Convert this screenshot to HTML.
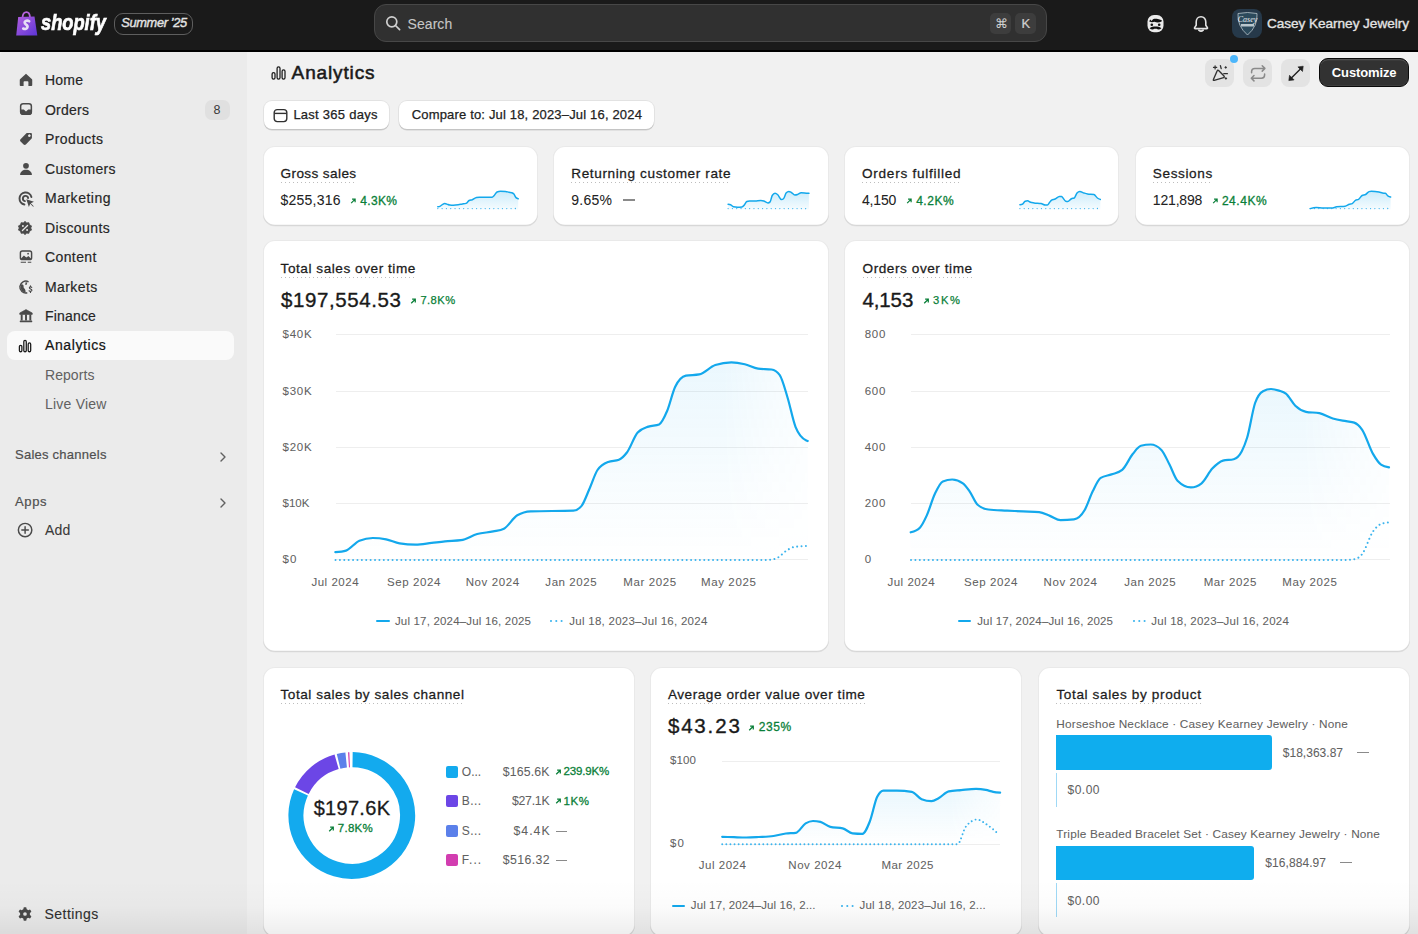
<!DOCTYPE html><html><head><meta charset="utf-8"><style>
*{margin:0;padding:0;box-sizing:border-box}
html,body{width:1418px;height:934px;overflow:hidden;background:#f1f1f1;font-family:"Liberation Sans",sans-serif}
.a{position:absolute}
.t{position:absolute;line-height:1;white-space:nowrap}
.card{position:absolute;background:#fff;border-radius:12px;box-shadow:inset 0 0 0 1px rgba(0,0,0,.085),inset 0 -1.6px 0 0 rgba(0,0,0,.075),0 0.6px 0 0 rgba(0,0,0,.05)}
.ul{position:absolute;height:1.2px;background-image:linear-gradient(90deg,#bdbdbd 0 1.3px,transparent 1.3px 4px);background-size:4px 1.2px}
</style></head><body><div class="a" style="left:0.00px;top:0.00px;width:1418.00px;height:52.00px;background:#1a1a1a"></div>
<div class="a" style="left:0.00px;top:50.40px;width:1418.00px;height:2.00px;background:#000"></div>
<div class="a" style="left:0.00px;top:52.00px;width:247.00px;height:882.00px;background:#ebebeb;border-top-left-radius:4px"></div>
<div class="a" style="left:247.00px;top:52.00px;width:1171.00px;height:882.00px;background:#f1f1f1;border-top-right-radius:4px"></div>
<svg class="a" style="left:14.50px;top:10.50px;" width="23.00" height="26.00" viewBox="0 0 23 26">
<defs><linearGradient id="bagg" x1="0" y1="0" x2="1" y2="1"><stop offset="0" stop-color="#b25ee0"/><stop offset="1" stop-color="#5b35d5"/></linearGradient></defs>
<path d="M7.5 6.5 C7.8 3 9.5 1.2 11.5 1.2 C13.5 1.2 14.8 3 15 6.5" fill="none" stroke="#b863df" stroke-width="1.8"/>
<path d="M3.2 6 L19.5 5.6 L22.3 24.6 L1.2 24.6 Z" fill="url(#bagg)"/>
<path d="M14.2 10.3 C13.2 9.6 11.6 9.5 10.5 10.1 C9.2 10.9 9.4 12.4 10.8 13.3 C12.4 14.3 12.9 15.4 12.3 16.7 C11.6 18.1 9.7 18.3 8.2 17.5" fill="none" stroke="#e6ddf5" stroke-width="2.6" stroke-linecap="round"/>
</svg>
<div class="t" style="left:40.50px;top:12.08px;font-size:22px;color:#ffffff;font-weight:700;font-style:italic;letter-spacing:0.000px;-webkit-text-stroke:0.7px #ffffff;transform:scaleX(0.83);transform-origin:0 0;">shopify</div>
<div class="a" style="left:114.00px;top:13.20px;width:78.80px;height:21.60px;border:1.5px solid #5e5e5e;border-radius:9px"></div>
<div class="t" style="left:121.30px;top:17.36px;font-size:12.8px;color:#e3e3e3;font-weight:400;font-style:italic;letter-spacing:-0.345px;-webkit-text-stroke:0.4px #e3e3e3;">Summer ’25</div>
<div class="a" style="left:373.50px;top:3.70px;width:673.30px;height:38.50px;background:#303030;border:1px solid #474747;border-radius:12px"></div>
<svg class="a" style="left:385.00px;top:15.00px;" width="16.00" height="16.00" viewBox="0 0 16 16"><circle cx="6.8" cy="6.8" r="5" fill="none" stroke="#cfcfcf" stroke-width="1.7"/><path d="M10.5 10.5 L14.6 14.6" stroke="#cfcfcf" stroke-width="1.7" stroke-linecap="round"/></svg>
<div class="t" style="left:407.60px;top:16.55px;font-size:14px;color:#c6c6c6;font-weight:400;font-style:normal;letter-spacing:0.048px;-webkit-text-stroke:0.1px #c6c6c6;">Search</div>
<div class="a" style="left:990.30px;top:13.00px;width:20.30px;height:21.00px;background:#3d3d3d;border-radius:5px"></div>
<div class="a" style="left:1015.40px;top:13.00px;width:20.90px;height:21.00px;background:#3d3d3d;border-radius:5px"></div>
<div class="t" style="left:994.50px;top:17.30px;font-size:13px;color:#d0d0d0;font-weight:400;font-style:normal;letter-spacing:0.000px;">⌘</div>
<div class="t" style="left:1021.50px;top:17.30px;font-size:13px;color:#d0d0d0;font-weight:400;font-style:normal;letter-spacing:0.000px;-webkit-text-stroke:0.2px #d0d0d0;">K</div>
<svg class="a" style="left:1145.50px;top:13.50px;" width="19.00" height="19.00" viewBox="0 0 19 19">
<rect x="1.5" y="1" width="16" height="17.2" rx="6.5" fill="#ebebeb"/>
<path d="M3.2 7.6 L4.2 5.6 L5.6 7 L7 5.2 C9 4.6 12 4.8 13.6 5.6 L15.8 6.2 L15.6 7.6 C13 8.6 10.6 8.8 8.6 7.8 L6 8.2 Z" fill="#111"/>
<circle cx="5.8" cy="10.8" r="1.3" fill="#111"/><circle cx="13.2" cy="10.8" r="1.3" fill="#111"/>
<path d="M3.6 14.2 C5.5 13 7.5 12.6 9.5 12.6 C11.5 12.6 13.5 13 15.4 14.2 C13.8 15.6 12 15.8 10.6 14.8 L8.4 14.8 C7 15.8 5.2 15.6 3.6 14.2 Z" fill="#111"/>
</svg>
<svg class="a" style="left:1192.00px;top:15.00px;" width="18.00" height="18.00" viewBox="0 0 18 18">
<path d="M9 1.8 C6 1.8 4.2 4 4.2 7 L4.2 10.2 L2.6 12.6 C2.3 13.1 2.6 13.6 3.2 13.6 L14.8 13.6 C15.4 13.6 15.7 13.1 15.4 12.6 L13.8 10.2 L13.8 7 C13.8 4 12 1.8 9 1.8 Z" fill="none" stroke="#e3e3e3" stroke-width="1.6" stroke-linejoin="round"/>
<path d="M6.8 15.2 Q9 17.2 11.2 15.2" stroke="#e3e3e3" stroke-width="1.6" fill="none" stroke-linecap="round"/>
</svg>
<div class="a" style="left:1232.30px;top:8.50px;width:29.60px;height:29.20px;background:#26394a;border-radius:8px"></div>
<svg class="a" style="left:1234.50px;top:10.00px;" width="25.00" height="27.00" viewBox="0 0 25 27">
<path d="M3 3.5 Q12.5 1.5 22 3.5 Q23 16 12.5 25 Q2 16 3 3.5 Z" fill="#2c4a5c" stroke="#b9c5cc" stroke-width="0.8"/>
<text x="12.5" y="11.5" font-family="Liberation Serif" font-style="italic" font-size="8" fill="#e8eef2" text-anchor="middle">Casey</text>
<rect x="6" y="14" width="13" height="2.5" fill="#dfe6ea" opacity=".8"/>
</svg>
<div class="t" style="left:1267.00px;top:16.69px;font-size:13.6px;color:#e3e3e3;font-weight:400;font-style:normal;letter-spacing:-0.043px;-webkit-text-stroke:0.35px #e3e3e3;">Casey Kearney Jewelry</div>
<div class="a" style="left:6.60px;top:330.80px;width:227.20px;height:29.00px;background:#fafafa;border-radius:8px"></div>
<div class="t" style="left:45.00px;top:73.15px;font-size:14px;color:#262626;font-weight:400;font-style:normal;letter-spacing:0.218px;-webkit-text-stroke:0.18px #262626;">Home</div>
<div class="t" style="left:45.00px;top:102.65px;font-size:14px;color:#262626;font-weight:400;font-style:normal;letter-spacing:0.223px;-webkit-text-stroke:0.18px #262626;">Orders</div>
<div class="t" style="left:45.00px;top:132.15px;font-size:14px;color:#262626;font-weight:400;font-style:normal;letter-spacing:0.393px;-webkit-text-stroke:0.18px #262626;">Products</div>
<div class="t" style="left:45.00px;top:161.65px;font-size:14px;color:#262626;font-weight:400;font-style:normal;letter-spacing:0.364px;-webkit-text-stroke:0.18px #262626;">Customers</div>
<div class="t" style="left:45.00px;top:191.15px;font-size:14px;color:#262626;font-weight:400;font-style:normal;letter-spacing:0.504px;-webkit-text-stroke:0.18px #262626;">Marketing</div>
<div class="t" style="left:45.00px;top:220.65px;font-size:14px;color:#262626;font-weight:400;font-style:normal;letter-spacing:0.404px;-webkit-text-stroke:0.18px #262626;">Discounts</div>
<div class="t" style="left:45.00px;top:250.15px;font-size:14px;color:#262626;font-weight:400;font-style:normal;letter-spacing:0.394px;-webkit-text-stroke:0.18px #262626;">Content</div>
<div class="t" style="left:45.00px;top:279.65px;font-size:14px;color:#262626;font-weight:400;font-style:normal;letter-spacing:0.402px;-webkit-text-stroke:0.18px #262626;">Markets</div>
<div class="t" style="left:45.00px;top:308.95px;font-size:14px;color:#262626;font-weight:400;font-style:normal;letter-spacing:0.182px;-webkit-text-stroke:0.18px #262626;">Finance</div>
<div class="t" style="left:45.00px;top:338.45px;font-size:14px;color:#141414;font-weight:400;font-style:normal;letter-spacing:0.597px;-webkit-text-stroke:0.22px #141414;">Analytics</div>
<div class="t" style="left:45.00px;top:367.95px;font-size:14px;color:#616161;font-weight:400;font-style:normal;letter-spacing:0.063px;">Reports</div>
<div class="t" style="left:45.00px;top:397.45px;font-size:14px;color:#616161;font-weight:400;font-style:normal;letter-spacing:0.217px;">Live View</div>
<div class="t" style="left:15.00px;top:448.40px;font-size:13px;color:#4f4f4f;font-weight:400;font-style:normal;letter-spacing:0.248px;-webkit-text-stroke:0.2px #4f4f4f;">Sales channels</div>
<div class="t" style="left:15.00px;top:494.60px;font-size:13px;color:#4f4f4f;font-weight:400;font-style:normal;letter-spacing:0.623px;-webkit-text-stroke:0.2px #4f4f4f;">Apps</div>
<div class="t" style="left:45.00px;top:523.45px;font-size:14px;color:#3a3a3a;font-weight:400;font-style:normal;letter-spacing:0.244px;-webkit-text-stroke:0.08px #3a3a3a;">Add</div>
<div class="t" style="left:44.60px;top:906.85px;font-size:14px;color:#303030;font-weight:400;font-style:normal;letter-spacing:0.430px;-webkit-text-stroke:0.12px #303030;">Settings</div>
<div class="a" style="left:204.80px;top:99.50px;width:24.90px;height:20.60px;background:#e0e0e0;border-radius:7px"></div>
<div class="t" style="left:213.60px;top:104.02px;font-size:12.5px;color:#3a3a3a;font-weight:400;font-style:normal;letter-spacing:0.000px;">8</div>
<svg class="a" style="left:217.00px;top:450.90px;" width="12.00" height="12.00" viewBox="0 0 12 12"><path d="M4 2 L8 6 L4 10" fill="none" stroke="#616161" stroke-width="1.4" stroke-linecap="round" stroke-linejoin="round"/></svg>
<svg class="a" style="left:217.00px;top:497.30px;" width="12.00" height="12.00" viewBox="0 0 12 12"><path d="M4 2 L8 6 L4 10" fill="none" stroke="#616161" stroke-width="1.4" stroke-linecap="round" stroke-linejoin="round"/></svg>
<svg class="a" style="left:17.50px;top:71.50px;" width="16.00" height="16.00" viewBox="0 0 20 20"><path d="M10 2.2 L17.2 8.6 C17.6 9 17.8 9.5 17.8 10 L17.8 16.2 C17.8 17 17.2 17.6 16.4 17.6 L13 17.6 L13 12.6 C13 12 12.6 11.6 12 11.6 L8 11.6 C7.4 11.6 7 12 7 12.6 L7 17.6 L3.6 17.6 C2.8 17.6 2.2 17 2.2 16.2 L2.2 10 C2.2 9.5 2.4 9 2.8 8.6 Z" fill="#4a4a4a"/></svg>
<svg class="a" style="left:17.50px;top:101.00px;" width="16.00" height="16.00" viewBox="0 0 20 20"><rect x="3.3" y="3.3" width="13.4" height="13.4" rx="3" fill="none" stroke="#4a4a4a" stroke-width="1.9"/><path d="M2.8 10.6 L7.2 10.6 L10 13.2 L12.8 10.6 L17.2 10.6 L17.2 14.2 Q17.2 17.2 14.2 17.2 L5.8 17.2 Q2.8 17.2 2.8 14.2 Z" fill="#4a4a4a"/></svg>
<svg class="a" style="left:17.50px;top:131.00px;" width="16.00" height="16.00" viewBox="0 0 20 20"><path d="M11.6 2.6 L16.2 2.6 C16.9 2.6 17.4 3.1 17.4 3.8 L17.4 8.4 C17.4 8.9 17.2 9.4 16.8 9.8 L9.8 16.8 C9 17.6 7.8 17.6 7 16.8 L3.2 13 C2.4 12.2 2.4 11 3.2 10.2 L10.2 3.2 C10.6 2.8 11.1 2.6 11.6 2.6 Z M14.2 4.4 A1.4 1.4 0 1 0 14.21 4.4 Z" fill="#4a4a4a" fill-rule="evenodd"/><circle cx="14.2" cy="5.8" r="1.3" fill="#ebebeb"/></svg>
<svg class="a" style="left:17.50px;top:160.50px;" width="16.00" height="16.00" viewBox="0 0 20 20"><circle cx="10" cy="6" r="3.6" fill="#4a4a4a"/><path d="M2.6 17.4 C2.6 13.2 6 10.8 10 10.8 C14 10.8 17.4 13.2 17.4 17.4 Z" fill="#4a4a4a"/></svg>
<svg class="a" style="left:15.60px;top:188.60px;" width="19.50" height="19.50" viewBox="0 0 20 20"><path d="M15.8 8.2 A6.2 6.2 0 1 0 8.6 15.9" fill="none" stroke="#4a4a4a" stroke-width="2" stroke-linecap="round"/><path d="M12.4 9.2 A2.7 2.7 0 1 0 9.2 12.4" fill="none" stroke="#4a4a4a" stroke-width="2" stroke-linecap="round"/><path d="M10.6 10.6 L18.4 13.2 L15.2 14.6 L18.2 17.6 L17.6 18.2 L14.6 15.2 L13.2 18.4 Z" fill="#4a4a4a"/></svg>
<svg class="a" style="left:17.00px;top:219.50px;" width="16.00" height="16.00" viewBox="0 0 20 20"><path d="M10 1.6 L12 3.6 L14.8 3.3 L15.6 6 L18.2 7.4 L17.2 10 L18.2 12.6 L15.6 14 L14.8 16.7 L12 16.4 L10 18.4 L8 16.4 L5.2 16.7 L4.4 14 L1.8 12.6 L2.8 10 L1.8 7.4 L4.4 6 L5.2 3.3 L8 3.6 Z" fill="#4a4a4a" stroke="#4a4a4a" stroke-width="1" stroke-linejoin="round"/><path d="M6.8 13.2 L13.2 6.8" stroke="#ebebeb" stroke-width="1.6" stroke-linecap="round"/><circle cx="7.4" cy="7.4" r="1.2" fill="#ebebeb"/><circle cx="12.6" cy="12.6" r="1.2" fill="#ebebeb"/></svg>
<svg class="a" style="left:17.50px;top:248.50px;" width="16.00" height="16.00" viewBox="0 0 20 20"><rect x="3" y="2.6" width="14" height="10.6" rx="2.4" fill="none" stroke="#4a4a4a" stroke-width="1.8"/><path d="M3.8 11.8 L7.4 8 L10.4 10.6 L13 8.8 L16.2 11.8 L16.2 12.4 L3.8 12.4 Z" fill="#4a4a4a"/><circle cx="12.6" cy="5.8" r="1.1" fill="#4a4a4a"/><path d="M3.4 16.6 L10 16.6 M12.2 16.6 L16.6 16.6" stroke="#4a4a4a" stroke-width="1.3"/></svg>
<svg class="a" style="left:17.50px;top:278.50px;" width="16.00" height="16.00" viewBox="0 0 20 20"><path d="M13.2 3.5 A7.4 7.4 0 1 0 11.6 17.2" fill="none" stroke="#4a4a4a" stroke-width="1.8"/><path d="M4 6.6 C6 6.2 7.4 7.6 7 9.6 C6.6 11.2 8.6 12 9.2 13.6 L9.6 16.8 C6 16.6 3.4 14 3.2 10.2 Z" fill="#4a4a4a"/><path d="M9.6 3.6 L11.6 4.6 L10.6 7.6 L9 7.2 Z" fill="#4a4a4a"/><path d="M17.2 10.4 C16.4 9.6 14.2 9.6 14.2 11 C14.2 12.6 17.4 12.2 17.4 14 C17.4 15.6 15 15.6 13.8 14.8 M15.6 8.6 L15.6 9.8 M15.6 15.4 L15.6 16.8" fill="none" stroke="#4a4a4a" stroke-width="1.4" stroke-linecap="round"/></svg>
<svg class="a" style="left:17.50px;top:307.50px;" width="16.00" height="16.00" viewBox="0 0 20 20"><path d="M10 2 L17.8 6.2 L17.8 8 L2.2 8 L2.2 6.2 Z" fill="#4a4a4a" stroke="#4a4a4a" stroke-width="0.8" stroke-linejoin="round"/><rect x="2.2" y="15.6" width="15.6" height="2.2" rx="0.6" fill="#4a4a4a"/><rect x="3.4" y="8" width="2.4" height="7.6" fill="#4a4a4a"/><rect x="8.8" y="8" width="2.4" height="7.6" fill="#4a4a4a"/><rect x="14.2" y="8" width="2.4" height="7.6" fill="#4a4a4a"/></svg>
<svg class="a" style="left:17.20px;top:337.50px;" width="16.00" height="16.00" viewBox="0 0 20 20"><rect x="3" y="9.2" width="3.1" height="8" rx="1.55" fill="none" stroke="#1a1a1a" stroke-width="1.6"/><rect x="8.5" y="3" width="3.1" height="14.2" rx="1.55" fill="none" stroke="#1a1a1a" stroke-width="1.6"/><rect x="14" y="6.2" width="3.1" height="11" rx="1.55" fill="none" stroke="#1a1a1a" stroke-width="1.6"/></svg>
<svg class="a" style="left:16.20px;top:521.30px;" width="18.20" height="18.20" viewBox="0 0 20 20"><circle cx="10" cy="10" r="7.4" fill="none" stroke="#4a4a4a" stroke-width="1.6"/><path d="M10 6.4 L10 13.6 M6.4 10 L13.6 10" stroke="#4a4a4a" stroke-width="1.6" stroke-linecap="round"/></svg>
<svg class="a" style="left:17.20px;top:905.80px;" width="16.00" height="16.00" viewBox="0 0 20 20"><circle cx="10" cy="10" r="6.2" fill="#4a4a4a"/><rect x="8.1" y="1.6" width="3.8" height="4" rx="1" fill="#4a4a4a" transform="rotate(0 10 10)"/><rect x="8.1" y="1.6" width="3.8" height="4" rx="1" fill="#4a4a4a" transform="rotate(60 10 10)"/><rect x="8.1" y="1.6" width="3.8" height="4" rx="1" fill="#4a4a4a" transform="rotate(120 10 10)"/><rect x="8.1" y="1.6" width="3.8" height="4" rx="1" fill="#4a4a4a" transform="rotate(180 10 10)"/><rect x="8.1" y="1.6" width="3.8" height="4" rx="1" fill="#4a4a4a" transform="rotate(240 10 10)"/><rect x="8.1" y="1.6" width="3.8" height="4" rx="1" fill="#4a4a4a" transform="rotate(300 10 10)"/><circle cx="10" cy="10" r="2.3" fill="#e9e9e9"/></svg>
<svg class="a" style="left:270.50px;top:65.50px;" width="15.00" height="14.00" viewBox="0 0 15 14"><rect x="1.1" y="6.6" width="2.9" height="6.6" rx="1.45" fill="none" stroke="#1a1a1a" stroke-width="1.25"/><rect x="6.1" y="0.8" width="2.9" height="12.4" rx="1.45" fill="none" stroke="#1a1a1a" stroke-width="1.25"/><rect x="11.1" y="3.8" width="2.9" height="9.4" rx="1.45" fill="none" stroke="#1a1a1a" stroke-width="1.25"/></svg>
<div class="t" style="left:291.60px;top:63.12px;font-size:19px;color:#1a1a1a;font-weight:400;font-style:normal;letter-spacing:0.859px;-webkit-text-stroke:0.55px #1a1a1a;">Analytics</div>
<div class="a" style="left:1205.20px;top:58.60px;width:29.10px;height:28.40px;background:#e3e3e3;border-radius:8px"></div>
<div class="a" style="left:1243.40px;top:58.60px;width:29.00px;height:28.40px;background:#e3e3e3;border-radius:8px"></div>
<div class="a" style="left:1281.20px;top:58.60px;width:29.10px;height:28.40px;background:#e3e3e3;border-radius:8px"></div>
<svg class="a" style="left:1205.00px;top:58.60px;" width="30.00" height="29.00" viewBox="1205 58.6 30 29">
<path d="M1213.4 79.2 C1213 79.6 1213.6 80.2 1214.2 79.9 L1223.6 77.2 C1224.3 77 1224.5 76.2 1224 75.7 L1218.6 70.1 C1218.1 69.6 1217.3 69.8 1217.1 70.5 Z" fill="none" stroke="#303030" stroke-width="1.35" stroke-linejoin="round"/>
<path d="M1215.1 65.4 L1215.1 68.6 M1213.5 67 L1216.7 67" stroke="#303030" stroke-width="1.2" stroke-linecap="round"/>
<path d="M1220.4 65.2 L1221.2 68.2" stroke="#303030" stroke-width="1.3" stroke-linecap="round"/>
<path d="M1225.7 65.6 L1227.1 67 L1225.7 68.4 L1224.3 67 Z" fill="#303030"/>
<path d="M1223.8 73.3 L1227.4 73.3" stroke="#303030" stroke-width="1.3" stroke-linecap="round"/>
<path d="M1225.9 76.6 L1227.3 78 L1225.9 79.4 L1224.5 78 Z" fill="#303030"/>
</svg>
<div class="a" style="left:1229.80px;top:55.10px;width:8.00px;height:8.00px;background:#4cb6fb;border-radius:50%"></div>
<svg class="a" style="left:1243.00px;top:58.60px;" width="30.00" height="29.00" viewBox="1243 58.6 30 29">
<path d="M1251.6 72.3 L1251.6 71.2 C1251.6 69.4 1253 68 1254.8 68 L1264.6 68 M1262.2 65.3 L1264.9 68 L1262.2 70.7" fill="none" stroke="#8a8a8a" stroke-width="1.5" stroke-linecap="round" stroke-linejoin="round"/>
<path d="M1264.6 73.6 L1264.6 74.6 C1264.6 76.4 1263.2 77.8 1261.4 77.8 L1251.6 77.8 M1254 75.1 L1251.3 77.8 L1254 80.5" fill="none" stroke="#8a8a8a" stroke-width="1.5" stroke-linecap="round" stroke-linejoin="round"/>
</svg>
<svg class="a" style="left:1281.00px;top:58.60px;" width="30.00" height="29.00" viewBox="1281 58.6 30 29">
<path d="M1290.6 78.4 L1301.4 67.6" stroke="#1f1f1f" stroke-width="1.35" stroke-linecap="round"/>
<path d="M1303.2 65.8 L1297.9 66.5 L1302.5 71.1 Z" fill="#1f1f1f" stroke="#1f1f1f" stroke-width="0.6" stroke-linejoin="round"/>
<path d="M1288.8 80.2 L1289.5 74.9 L1294.1 79.5 Z" fill="#1f1f1f" stroke="#1f1f1f" stroke-width="0.6" stroke-linejoin="round"/>
</svg>
<div class="a" style="left:1319.20px;top:58.20px;width:90.00px;height:29.00px;background:#323232;border:1px solid #0a0a0a;border-radius:9px;box-shadow:inset 0 1.2px 0 rgba(255,255,255,.16),inset 0 -1px 0 rgba(255,255,255,.06)"></div>
<div class="t" style="left:1331.80px;top:65.80px;font-size:13px;color:#ffffff;font-weight:700;font-style:normal;letter-spacing:-0.116px;">Customize</div>
<div class="a" style="left:263.70px;top:101.00px;width:125.80px;height:28.00px;background:#fff;border-radius:8px;box-shadow:0 0 0 1px rgba(0,0,0,.06),0 1.5px 0 rgba(0,0,0,.13)"></div>
<div class="a" style="left:399.00px;top:101.00px;width:255.00px;height:28.00px;background:#fff;border-radius:8px;box-shadow:0 0 0 1px rgba(0,0,0,.06),0 1.5px 0 rgba(0,0,0,.13)"></div>
<svg class="a" style="left:272.50px;top:107.50px;" width="15.00" height="15.00" viewBox="0 0 15 15"><rect x="1.2" y="1.6" width="12.6" height="12" rx="3" fill="none" stroke="#303030" stroke-width="1.4"/><path d="M1.5 5.4 L13.5 5.4" stroke="#303030" stroke-width="1.4"/></svg>
<div class="t" style="left:293.40px;top:108.30px;font-size:13px;color:#222222;font-weight:400;font-style:normal;letter-spacing:0.254px;-webkit-text-stroke:0.25px #222222;">Last 365 days</div>
<div class="t" style="left:411.70px;top:108.30px;font-size:13px;color:#222222;font-weight:400;font-style:normal;letter-spacing:0.171px;-webkit-text-stroke:0.25px #222222;">Compare to: Jul 18, 2023–Jul 16, 2024</div>
<div class="card" style="left:262.50px;top:145.50px;width:275.25px;height:80.50px;"></div>
<div class="card" style="left:553.25px;top:145.50px;width:275.25px;height:80.50px;"></div>
<div class="card" style="left:844.00px;top:145.50px;width:275.25px;height:80.50px;"></div>
<div class="card" style="left:1134.75px;top:145.50px;width:275.25px;height:80.50px;"></div>
<div class="t" style="left:280.50px;top:166.79px;font-size:13.6px;color:#1c1c1c;font-weight:400;font-style:normal;letter-spacing:0.390px;-webkit-text-stroke:0.26px #1c1c1c;">Gross sales</div>
<div class="ul" style="left:280.50px;top:182.00px;width:75.70px"></div>
<div class="t" style="left:280.50px;top:193.15px;font-size:14px;color:#222222;font-weight:400;font-style:normal;letter-spacing:0.244px;-webkit-text-stroke:0.05px #222222;">$255,316</div>
<svg class="a" style="left:350.10px;top:198.00px;" width="6.30" height="6.30" viewBox="0 0 8 8"><path d="M1.5 6.5 L6.2 1.8 M2.6 1.5 L6.5 1.5 L6.5 5.4" fill="none" stroke="#0a7f39" stroke-width="1.55" stroke-linecap="butt" stroke-linejoin="miter"/></svg>
<div class="t" style="left:360.30px;top:194.84px;font-size:12px;color:#0a7f39;font-weight:400;font-style:normal;letter-spacing:0.336px;-webkit-text-stroke:0.3px #0a7f39;">4.3K%</div>
<div class="t" style="left:571.25px;top:166.79px;font-size:13.6px;color:#1c1c1c;font-weight:400;font-style:normal;letter-spacing:0.612px;-webkit-text-stroke:0.26px #1c1c1c;">Returning customer rate</div>
<div class="ul" style="left:571.25px;top:182.00px;width:159.35px"></div>
<div class="t" style="left:571.25px;top:193.15px;font-size:14px;color:#222222;font-weight:400;font-style:normal;letter-spacing:0.263px;-webkit-text-stroke:0.05px #222222;">9.65%</div>
<div class="a" style="left:623.00px;top:199.30px;width:12.30px;height:1.40px;background:#8a8a8a"></div>
<div class="t" style="left:862.00px;top:166.79px;font-size:13.6px;color:#1c1c1c;font-weight:400;font-style:normal;letter-spacing:0.728px;-webkit-text-stroke:0.26px #1c1c1c;">Orders fulfilled</div>
<div class="ul" style="left:862.00px;top:182.00px;width:98.60px"></div>
<div class="t" style="left:862.00px;top:193.15px;font-size:14px;color:#222222;font-weight:400;font-style:normal;letter-spacing:-0.184px;-webkit-text-stroke:0.05px #222222;">4,150</div>
<svg class="a" style="left:906.20px;top:198.00px;" width="6.30" height="6.30" viewBox="0 0 8 8"><path d="M1.5 6.5 L6.2 1.8 M2.6 1.5 L6.5 1.5 L6.5 5.4" fill="none" stroke="#0a7f39" stroke-width="1.55" stroke-linecap="butt" stroke-linejoin="miter"/></svg>
<div class="t" style="left:916.20px;top:194.84px;font-size:12px;color:#0a7f39;font-weight:400;font-style:normal;letter-spacing:0.511px;-webkit-text-stroke:0.3px #0a7f39;">4.2K%</div>
<div class="t" style="left:1152.75px;top:166.79px;font-size:13.6px;color:#1c1c1c;font-weight:400;font-style:normal;letter-spacing:0.624px;-webkit-text-stroke:0.26px #1c1c1c;">Sessions</div>
<div class="ul" style="left:1152.75px;top:182.00px;width:59.55px"></div>
<div class="t" style="left:1152.75px;top:193.15px;font-size:14px;color:#222222;font-weight:400;font-style:normal;letter-spacing:-0.160px;-webkit-text-stroke:0.05px #222222;">121,898</div>
<svg class="a" style="left:1212.30px;top:198.00px;" width="6.30" height="6.30" viewBox="0 0 8 8"><path d="M1.5 6.5 L6.2 1.8 M2.6 1.5 L6.5 1.5 L6.5 5.4" fill="none" stroke="#0a7f39" stroke-width="1.55" stroke-linecap="butt" stroke-linejoin="miter"/></svg>
<div class="t" style="left:1221.90px;top:194.84px;font-size:12px;color:#0a7f39;font-weight:400;font-style:normal;letter-spacing:0.534px;-webkit-text-stroke:0.3px #0a7f39;">24.4K%</div>
<svg class="a" style="left:0;top:0" width="1418" height="934" viewBox="0 0 1418 934"><defs><linearGradient id="g1" x1="0" y1="191.3" x2="0" y2="209.5" gradientUnits="userSpaceOnUse"><stop offset="0" stop-color="#13a8ec" stop-opacity="0.22"/><stop offset="1" stop-color="#13a8ec" stop-opacity="0.04"/></linearGradient></defs><path d="M437.80,206.80 C438.50,206.73 439.20,206.67 439.90,206.40 C440.83,206.04 441.77,204.78 442.70,204.30 C443.40,203.94 444.10,203.60 444.80,203.60 C445.50,203.60 446.20,203.91 446.90,204.10 C447.83,204.36 448.77,204.90 449.70,205.00 C450.90,205.13 452.10,205.20 453.30,205.20 C454.93,205.20 456.57,205.03 458.20,204.80 C459.60,204.60 461.00,204.25 462.40,204.00 C463.60,203.79 464.80,203.80 466.00,203.40 C467.03,203.06 468.07,201.02 469.10,200.50 C470.17,199.97 471.23,200.09 472.30,199.70 C473.70,199.18 475.10,197.79 476.50,197.50 C477.47,197.30 478.43,197.20 479.40,197.20 C483.63,197.20 487.87,197.20 492.10,197.20 C492.80,197.20 493.50,196.20 494.20,195.50 C495.13,194.57 496.07,192.37 497.00,192.00 C498.17,191.53 499.33,191.30 500.50,191.30 C502.17,191.30 503.83,191.33 505.50,191.40 C506.67,191.45 507.83,192.07 509.00,192.30 C509.93,192.48 510.87,192.43 511.80,192.70 C512.50,192.90 513.20,193.28 513.90,194.10 C514.60,194.92 515.30,196.90 516.00,197.60 C516.73,198.33 517.47,198.52 518.20,198.70 L518.20,209.50 L437.80,209.50 Z" fill="url(#g1)"/><path d="M437.80,208.60 C463.27,208.60 488.73,208.60 514.20,208.60 C515.53,208.60 516.87,208.10 518.20,207.60" fill="none" stroke="#3bb4ee" stroke-width="1.3" stroke-linecap="round" stroke-dasharray="0.01 4.3"/><path d="M437.80,206.80 C438.50,206.73 439.20,206.67 439.90,206.40 C440.83,206.04 441.77,204.78 442.70,204.30 C443.40,203.94 444.10,203.60 444.80,203.60 C445.50,203.60 446.20,203.91 446.90,204.10 C447.83,204.36 448.77,204.90 449.70,205.00 C450.90,205.13 452.10,205.20 453.30,205.20 C454.93,205.20 456.57,205.03 458.20,204.80 C459.60,204.60 461.00,204.25 462.40,204.00 C463.60,203.79 464.80,203.80 466.00,203.40 C467.03,203.06 468.07,201.02 469.10,200.50 C470.17,199.97 471.23,200.09 472.30,199.70 C473.70,199.18 475.10,197.79 476.50,197.50 C477.47,197.30 478.43,197.20 479.40,197.20 C483.63,197.20 487.87,197.20 492.10,197.20 C492.80,197.20 493.50,196.20 494.20,195.50 C495.13,194.57 496.07,192.37 497.00,192.00 C498.17,191.53 499.33,191.30 500.50,191.30 C502.17,191.30 503.83,191.33 505.50,191.40 C506.67,191.45 507.83,192.07 509.00,192.30 C509.93,192.48 510.87,192.43 511.80,192.70 C512.50,192.90 513.20,193.28 513.90,194.10 C514.60,194.92 515.30,196.90 516.00,197.60 C516.73,198.33 517.47,198.52 518.20,198.70" fill="none" stroke="#13a8ec" stroke-width="1.5" stroke-linecap="round" stroke-linejoin="round"/></svg>
<svg class="a" style="left:0;top:0" width="1418" height="934" viewBox="0 0 1418 934"><defs><linearGradient id="g2" x1="0" y1="191.4" x2="0" y2="209.5" gradientUnits="userSpaceOnUse"><stop offset="0" stop-color="#13a8ec" stop-opacity="0.22"/><stop offset="1" stop-color="#13a8ec" stop-opacity="0.04"/></linearGradient></defs><path d="M728.10,204.30 C728.93,204.38 729.77,204.47 730.60,204.80 C731.53,205.17 732.47,206.62 733.40,206.80 C734.80,207.07 736.20,207.20 737.60,207.20 C739.03,207.20 740.47,207.10 741.90,206.90 C742.60,206.80 743.30,206.10 744.00,205.40 C744.93,204.46 745.87,201.83 746.80,201.50 C747.73,201.17 748.67,201.03 749.60,201.00 C751.50,200.93 753.40,200.97 755.30,200.90 C757.17,200.83 759.03,200.50 760.90,200.50 C761.83,200.50 762.77,200.74 763.70,201.00 C765.13,201.40 766.57,202.90 768.00,202.90 C768.70,202.90 769.40,202.57 770.10,201.90 C770.80,201.23 771.50,196.60 772.20,195.50 C773.13,194.03 774.07,193.30 775.00,193.30 C775.93,193.30 776.87,193.97 777.80,194.80 C779.00,195.86 780.20,199.60 781.40,199.60 C782.10,199.60 782.80,199.30 783.50,198.70 C784.43,197.90 785.37,193.67 786.30,192.70 C787.13,191.83 787.97,191.40 788.80,191.40 C789.60,191.40 790.40,191.88 791.20,192.30 C792.40,192.93 793.60,195.00 794.80,195.00 C795.73,195.00 796.67,194.79 797.60,194.50 C798.77,194.13 799.93,192.80 801.10,192.80 C802.27,192.80 803.43,192.83 804.60,192.90 C806.03,192.98 807.47,193.14 808.90,193.30 L808.90,209.50 L728.10,209.50 Z" fill="url(#g2)"/><path d="M728.10,208.60 C753.70,208.60 779.30,208.60 804.90,208.60 C806.23,208.60 807.57,208.10 808.90,207.60" fill="none" stroke="#3bb4ee" stroke-width="1.3" stroke-linecap="round" stroke-dasharray="0.01 4.3"/><path d="M728.10,204.30 C728.93,204.38 729.77,204.47 730.60,204.80 C731.53,205.17 732.47,206.62 733.40,206.80 C734.80,207.07 736.20,207.20 737.60,207.20 C739.03,207.20 740.47,207.10 741.90,206.90 C742.60,206.80 743.30,206.10 744.00,205.40 C744.93,204.46 745.87,201.83 746.80,201.50 C747.73,201.17 748.67,201.03 749.60,201.00 C751.50,200.93 753.40,200.97 755.30,200.90 C757.17,200.83 759.03,200.50 760.90,200.50 C761.83,200.50 762.77,200.74 763.70,201.00 C765.13,201.40 766.57,202.90 768.00,202.90 C768.70,202.90 769.40,202.57 770.10,201.90 C770.80,201.23 771.50,196.60 772.20,195.50 C773.13,194.03 774.07,193.30 775.00,193.30 C775.93,193.30 776.87,193.97 777.80,194.80 C779.00,195.86 780.20,199.60 781.40,199.60 C782.10,199.60 782.80,199.30 783.50,198.70 C784.43,197.90 785.37,193.67 786.30,192.70 C787.13,191.83 787.97,191.40 788.80,191.40 C789.60,191.40 790.40,191.88 791.20,192.30 C792.40,192.93 793.60,195.00 794.80,195.00 C795.73,195.00 796.67,194.79 797.60,194.50 C798.77,194.13 799.93,192.80 801.10,192.80 C802.27,192.80 803.43,192.83 804.60,192.90 C806.03,192.98 807.47,193.14 808.90,193.30" fill="none" stroke="#13a8ec" stroke-width="1.5" stroke-linecap="round" stroke-linejoin="round"/></svg>
<svg class="a" style="left:0;top:0" width="1418" height="934" viewBox="0 0 1418 934"><defs><linearGradient id="g3" x1="0" y1="191.4" x2="0" y2="209.5" gradientUnits="userSpaceOnUse"><stop offset="0" stop-color="#13a8ec" stop-opacity="0.22"/><stop offset="1" stop-color="#13a8ec" stop-opacity="0.04"/></linearGradient></defs><path d="M1019.90,204.70 C1020.70,204.63 1021.50,204.57 1022.30,204.30 C1023.27,203.98 1024.23,201.52 1025.20,201.20 C1026.00,200.93 1026.80,200.80 1027.60,200.80 C1028.57,200.80 1029.53,201.86 1030.50,202.20 C1031.67,202.61 1032.83,202.71 1034.00,202.90 C1036.33,203.28 1038.67,203.10 1041.00,203.50 C1042.43,203.75 1043.87,205.00 1045.30,205.00 C1046.00,205.00 1046.70,205.00 1047.40,205.00 C1048.10,205.00 1048.80,203.42 1049.50,202.60 C1050.20,201.78 1050.90,200.54 1051.60,200.10 C1052.77,199.37 1053.93,199.52 1055.10,199.00 C1056.53,198.36 1057.97,196.40 1059.40,196.40 C1060.10,196.40 1060.80,196.47 1061.50,196.60 C1062.90,196.87 1064.30,200.80 1065.70,201.20 C1066.40,201.40 1067.10,201.50 1067.80,201.50 C1069.00,201.50 1070.20,199.28 1071.40,198.70 C1072.33,198.25 1073.27,198.47 1074.20,198.00 C1075.13,197.53 1076.07,194.07 1077.00,193.00 C1077.93,191.93 1078.87,191.40 1079.80,191.40 C1081.20,191.40 1082.60,192.54 1084.00,193.00 C1085.20,193.39 1086.40,193.81 1087.60,194.00 C1089.70,194.33 1091.80,194.17 1093.90,194.50 C1095.07,194.69 1096.23,197.16 1097.40,198.00 C1098.37,198.69 1099.33,199.05 1100.30,199.40 L1100.30,209.50 L1019.90,209.50 Z" fill="url(#g3)"/><path d="M1019.90,208.60 C1045.37,208.60 1070.83,208.60 1096.30,208.60 C1097.63,208.60 1098.97,208.10 1100.30,207.60" fill="none" stroke="#3bb4ee" stroke-width="1.3" stroke-linecap="round" stroke-dasharray="0.01 4.3"/><path d="M1019.90,204.70 C1020.70,204.63 1021.50,204.57 1022.30,204.30 C1023.27,203.98 1024.23,201.52 1025.20,201.20 C1026.00,200.93 1026.80,200.80 1027.60,200.80 C1028.57,200.80 1029.53,201.86 1030.50,202.20 C1031.67,202.61 1032.83,202.71 1034.00,202.90 C1036.33,203.28 1038.67,203.10 1041.00,203.50 C1042.43,203.75 1043.87,205.00 1045.30,205.00 C1046.00,205.00 1046.70,205.00 1047.40,205.00 C1048.10,205.00 1048.80,203.42 1049.50,202.60 C1050.20,201.78 1050.90,200.54 1051.60,200.10 C1052.77,199.37 1053.93,199.52 1055.10,199.00 C1056.53,198.36 1057.97,196.40 1059.40,196.40 C1060.10,196.40 1060.80,196.47 1061.50,196.60 C1062.90,196.87 1064.30,200.80 1065.70,201.20 C1066.40,201.40 1067.10,201.50 1067.80,201.50 C1069.00,201.50 1070.20,199.28 1071.40,198.70 C1072.33,198.25 1073.27,198.47 1074.20,198.00 C1075.13,197.53 1076.07,194.07 1077.00,193.00 C1077.93,191.93 1078.87,191.40 1079.80,191.40 C1081.20,191.40 1082.60,192.54 1084.00,193.00 C1085.20,193.39 1086.40,193.81 1087.60,194.00 C1089.70,194.33 1091.80,194.17 1093.90,194.50 C1095.07,194.69 1096.23,197.16 1097.40,198.00 C1098.37,198.69 1099.33,199.05 1100.30,199.40" fill="none" stroke="#13a8ec" stroke-width="1.5" stroke-linecap="round" stroke-linejoin="round"/></svg>
<svg class="a" style="left:0;top:0" width="1418" height="934" viewBox="0 0 1418 934"><defs><linearGradient id="g4" x1="0" y1="191.3" x2="0" y2="209.5" gradientUnits="userSpaceOnUse"><stop offset="0" stop-color="#13a8ec" stop-opacity="0.22"/><stop offset="1" stop-color="#13a8ec" stop-opacity="0.04"/></linearGradient></defs><path d="M1310.20,208.60 C1312.20,208.00 1314.20,207.40 1316.20,207.40 C1318.57,207.40 1320.93,208.10 1323.30,208.10 C1326.10,208.10 1328.90,208.10 1331.70,208.10 C1333.37,208.10 1335.03,207.00 1336.70,206.80 C1339.50,206.47 1342.30,206.63 1345.10,206.30 C1346.53,206.13 1347.97,204.78 1349.40,204.30 C1350.33,203.99 1351.27,204.07 1352.20,203.60 C1353.37,203.02 1354.53,200.68 1355.70,200.10 C1356.63,199.63 1357.57,199.87 1358.50,199.40 C1359.70,198.80 1360.90,196.19 1362.10,195.50 C1363.27,194.83 1364.43,195.15 1365.60,194.50 C1366.77,193.85 1367.93,191.93 1369.10,191.60 C1369.80,191.40 1370.50,191.30 1371.20,191.30 C1373.80,191.30 1376.40,191.53 1379.00,192.00 C1380.17,192.21 1381.33,192.78 1382.50,193.00 C1383.43,193.17 1384.37,193.10 1385.30,193.30 C1386.27,193.51 1387.23,195.56 1388.20,196.20 C1389.00,196.73 1389.80,196.91 1390.60,197.10 L1390.60,209.50 L1310.20,209.50 Z" fill="url(#g4)"/><path d="M1310.20,208.60 C1335.67,208.60 1361.13,208.60 1386.60,208.60 C1387.93,208.60 1389.27,208.10 1390.60,207.60" fill="none" stroke="#3bb4ee" stroke-width="1.3" stroke-linecap="round" stroke-dasharray="0.01 4.3"/><path d="M1310.20,208.60 C1312.20,208.00 1314.20,207.40 1316.20,207.40 C1318.57,207.40 1320.93,208.10 1323.30,208.10 C1326.10,208.10 1328.90,208.10 1331.70,208.10 C1333.37,208.10 1335.03,207.00 1336.70,206.80 C1339.50,206.47 1342.30,206.63 1345.10,206.30 C1346.53,206.13 1347.97,204.78 1349.40,204.30 C1350.33,203.99 1351.27,204.07 1352.20,203.60 C1353.37,203.02 1354.53,200.68 1355.70,200.10 C1356.63,199.63 1357.57,199.87 1358.50,199.40 C1359.70,198.80 1360.90,196.19 1362.10,195.50 C1363.27,194.83 1364.43,195.15 1365.60,194.50 C1366.77,193.85 1367.93,191.93 1369.10,191.60 C1369.80,191.40 1370.50,191.30 1371.20,191.30 C1373.80,191.30 1376.40,191.53 1379.00,192.00 C1380.17,192.21 1381.33,192.78 1382.50,193.00 C1383.43,193.17 1384.37,193.10 1385.30,193.30 C1386.27,193.51 1387.23,195.56 1388.20,196.20 C1389.00,196.73 1389.80,196.91 1390.60,197.10" fill="none" stroke="#13a8ec" stroke-width="1.5" stroke-linecap="round" stroke-linejoin="round"/></svg>
<div class="card" style="left:262.50px;top:240.00px;width:566.00px;height:412.00px;"></div>
<div class="card" style="left:844.00px;top:240.00px;width:566.00px;height:412.00px;"></div>
<div class="t" style="left:280.60px;top:261.59px;font-size:13.6px;color:#1c1c1c;font-weight:400;font-style:normal;letter-spacing:0.542px;-webkit-text-stroke:0.26px #1c1c1c;">Total sales over time</div>
<div class="ul" style="left:280.60px;top:276.80px;width:134.80px"></div>
<div class="t" style="left:862.50px;top:261.59px;font-size:13.6px;color:#1c1c1c;font-weight:400;font-style:normal;letter-spacing:0.562px;-webkit-text-stroke:0.26px #1c1c1c;">Orders over time</div>
<div class="ul" style="left:862.50px;top:276.80px;width:109.70px"></div>
<div class="t" style="left:281.00px;top:289.65px;font-size:20.5px;color:#1a1a1a;font-weight:400;font-style:normal;letter-spacing:0.600px;-webkit-text-stroke:0.35px #1a1a1a;">$197,554.53</div>
<svg class="a" style="left:410.30px;top:298.10px;" width="6.50" height="6.50" viewBox="0 0 8 8"><path d="M1.5 6.5 L6.2 1.8 M2.6 1.5 L6.5 1.5 L6.5 5.4" fill="none" stroke="#0a7f39" stroke-width="1.55" stroke-linecap="butt" stroke-linejoin="miter"/></svg>
<div class="t" style="left:420.40px;top:294.82px;font-size:11.2px;color:#0a7f39;font-weight:400;font-style:normal;letter-spacing:0.450px;-webkit-text-stroke:0.25px #0a7f39;">7.8K%</div>
<div class="t" style="left:862.50px;top:289.65px;font-size:20.5px;color:#1a1a1a;font-weight:400;font-style:normal;letter-spacing:-0.125px;-webkit-text-stroke:0.35px #1a1a1a;">4,153</div>
<svg class="a" style="left:923.00px;top:298.10px;" width="6.50" height="6.50" viewBox="0 0 8 8"><path d="M1.5 6.5 L6.2 1.8 M2.6 1.5 L6.5 1.5 L6.5 5.4" fill="none" stroke="#0a7f39" stroke-width="1.55" stroke-linecap="butt" stroke-linejoin="miter"/></svg>
<div class="t" style="left:933.10px;top:294.82px;font-size:11.2px;color:#0a7f39;font-weight:400;font-style:normal;letter-spacing:1.671px;-webkit-text-stroke:0.25px #0a7f39;">3K%</div>
<div class="a" style="left:335.50px;top:334.40px;width:472.00px;height:1.00px;background:#eeeeee"></div>
<div class="a" style="left:335.50px;top:390.65px;width:472.00px;height:1.00px;background:#eeeeee"></div>
<div class="a" style="left:335.50px;top:446.90px;width:472.00px;height:1.00px;background:#eeeeee"></div>
<div class="a" style="left:335.50px;top:503.15px;width:472.00px;height:1.00px;background:#eeeeee"></div>
<div class="a" style="left:911.00px;top:334.40px;width:478.70px;height:1.00px;background:#eeeeee"></div>
<div class="a" style="left:911.00px;top:390.65px;width:478.70px;height:1.00px;background:#eeeeee"></div>
<div class="a" style="left:911.00px;top:446.90px;width:478.70px;height:1.00px;background:#eeeeee"></div>
<div class="a" style="left:911.00px;top:503.15px;width:478.70px;height:1.00px;background:#eeeeee"></div>
<div class="t" style="left:282.50px;top:329.27px;font-size:11.5px;color:#616161;font-weight:400;font-style:normal;letter-spacing:0.780px;-webkit-text-stroke:0.05px #616161;">$40K</div>
<div class="t" style="left:282.50px;top:385.52px;font-size:11.5px;color:#616161;font-weight:400;font-style:normal;letter-spacing:0.780px;-webkit-text-stroke:0.05px #616161;">$30K</div>
<div class="t" style="left:282.50px;top:441.77px;font-size:11.5px;color:#616161;font-weight:400;font-style:normal;letter-spacing:0.780px;-webkit-text-stroke:0.05px #616161;">$20K</div>
<div class="t" style="left:282.50px;top:498.02px;font-size:11.5px;color:#616161;font-weight:400;font-style:normal;letter-spacing:0.014px;-webkit-text-stroke:0.05px #616161;">$10K</div>
<div class="t" style="left:282.50px;top:554.27px;font-size:11.5px;color:#616161;font-weight:400;font-style:normal;letter-spacing:1.208px;-webkit-text-stroke:0.05px #616161;">$0</div>
<div class="t" style="left:864.70px;top:329.27px;font-size:11.5px;color:#616161;font-weight:400;font-style:normal;letter-spacing:0.756px;-webkit-text-stroke:0.05px #616161;">800</div>
<div class="t" style="left:864.70px;top:385.52px;font-size:11.5px;color:#616161;font-weight:400;font-style:normal;letter-spacing:0.756px;-webkit-text-stroke:0.05px #616161;">600</div>
<div class="t" style="left:864.70px;top:441.77px;font-size:11.5px;color:#616161;font-weight:400;font-style:normal;letter-spacing:0.756px;-webkit-text-stroke:0.05px #616161;">400</div>
<div class="t" style="left:864.70px;top:498.02px;font-size:11.5px;color:#616161;font-weight:400;font-style:normal;letter-spacing:0.756px;-webkit-text-stroke:0.05px #616161;">200</div>
<div class="t" style="left:864.70px;top:554.27px;font-size:11.5px;color:#616161;font-weight:400;font-style:normal;letter-spacing:0.000px;-webkit-text-stroke:0.05px #616161;">0</div>
<div class="t" style="left:311.41px;top:576.87px;font-size:11.5px;color:#616161;font-weight:400;font-style:normal;letter-spacing:0.528px;-webkit-text-stroke:0.05px #616161;">Jul 2024</div>
<div class="t" style="left:386.99px;top:576.87px;font-size:11.5px;color:#616161;font-weight:400;font-style:normal;letter-spacing:0.598px;-webkit-text-stroke:0.05px #616161;">Sep 2024</div>
<div class="t" style="left:465.69px;top:576.87px;font-size:11.5px;color:#616161;font-weight:400;font-style:normal;letter-spacing:0.598px;-webkit-text-stroke:0.05px #616161;">Nov 2024</div>
<div class="t" style="left:545.33px;top:576.87px;font-size:11.5px;color:#616161;font-weight:400;font-style:normal;letter-spacing:0.575px;-webkit-text-stroke:0.05px #616161;">Jan 2025</div>
<div class="t" style="left:623.34px;top:576.87px;font-size:11.5px;color:#616161;font-weight:400;font-style:normal;letter-spacing:0.590px;-webkit-text-stroke:0.05px #616161;">Mar 2025</div>
<div class="t" style="left:701.00px;top:576.87px;font-size:11.5px;color:#616161;font-weight:400;font-style:normal;letter-spacing:0.613px;-webkit-text-stroke:0.05px #616161;">May 2025</div>
<div class="t" style="left:887.41px;top:576.87px;font-size:11.5px;color:#616161;font-weight:400;font-style:normal;letter-spacing:0.528px;-webkit-text-stroke:0.05px #616161;">Jul 2024</div>
<div class="t" style="left:963.99px;top:576.87px;font-size:11.5px;color:#616161;font-weight:400;font-style:normal;letter-spacing:0.598px;-webkit-text-stroke:0.05px #616161;">Sep 2024</div>
<div class="t" style="left:1043.59px;top:576.87px;font-size:11.5px;color:#616161;font-weight:400;font-style:normal;letter-spacing:0.598px;-webkit-text-stroke:0.05px #616161;">Nov 2024</div>
<div class="t" style="left:1124.23px;top:576.87px;font-size:11.5px;color:#616161;font-weight:400;font-style:normal;letter-spacing:0.575px;-webkit-text-stroke:0.05px #616161;">Jan 2025</div>
<div class="t" style="left:1203.64px;top:576.87px;font-size:11.5px;color:#616161;font-weight:400;font-style:normal;letter-spacing:0.590px;-webkit-text-stroke:0.05px #616161;">Mar 2025</div>
<div class="t" style="left:1282.20px;top:576.87px;font-size:11.5px;color:#616161;font-weight:400;font-style:normal;letter-spacing:0.613px;-webkit-text-stroke:0.05px #616161;">May 2025</div>
<div class="a" style="left:376.00px;top:620.20px;width:13.50px;height:2.00px;background:#13a8ec;border-radius:1px"></div>
<div class="t" style="left:394.90px;top:615.57px;font-size:11.5px;color:#616161;font-weight:400;font-style:normal;letter-spacing:0.183px;-webkit-text-stroke:0.05px #616161;">Jul 17, 2024–Jul 16, 2025</div>
<svg class="a" style="left:549.10px;top:619.20px;" width="16.00" height="4.00" viewBox="549.1 619.2 16 4"><circle cx="551.10" cy="621.2" r="1.05" fill="#3bb4ee"/><circle cx="556.40" cy="621.2" r="1.05" fill="#3bb4ee"/><circle cx="561.70" cy="621.2" r="1.05" fill="#3bb4ee"/></svg>
<div class="t" style="left:569.30px;top:615.57px;font-size:11.5px;color:#616161;font-weight:400;font-style:normal;letter-spacing:0.262px;-webkit-text-stroke:0.05px #616161;">Jul 18, 2023–Jul 16, 2024</div>
<div class="a" style="left:957.80px;top:620.20px;width:13.50px;height:2.00px;background:#13a8ec;border-radius:1px"></div>
<div class="t" style="left:977.20px;top:615.57px;font-size:11.5px;color:#616161;font-weight:400;font-style:normal;letter-spacing:0.170px;-webkit-text-stroke:0.05px #616161;">Jul 17, 2024–Jul 16, 2025</div>
<svg class="a" style="left:1131.50px;top:619.20px;" width="16.00" height="4.00" viewBox="1131.5 619.2 16 4"><circle cx="1133.50" cy="621.2" r="1.05" fill="#3bb4ee"/><circle cx="1138.80" cy="621.2" r="1.05" fill="#3bb4ee"/><circle cx="1144.10" cy="621.2" r="1.05" fill="#3bb4ee"/></svg>
<div class="t" style="left:1151.30px;top:615.57px;font-size:11.5px;color:#616161;font-weight:400;font-style:normal;letter-spacing:0.245px;-webkit-text-stroke:0.05px #616161;">Jul 18, 2023–Jul 16, 2024</div>
<div class="a" style="left:335.50px;top:559.40px;width:472.00px;height:1.00px;background:#eeeeee"></div>
<svg class="a" style="left:0;top:0" width="1418" height="934" viewBox="0 0 1418 934"><defs><linearGradient id="g5" x1="0" y1="362.3" x2="0" y2="559.9" gradientUnits="userSpaceOnUse"><stop offset="0" stop-color="#13a8ec" stop-opacity="0.085"/><stop offset="1" stop-color="#13a8ec" stop-opacity="0.0"/></linearGradient><linearGradient id="mg5" x1="335.35" y1="0" x2="807.7" y2="0" gradientUnits="userSpaceOnUse"><stop offset="0" stop-color="#fff"/><stop offset="0.82" stop-color="#fff"/><stop offset="1" stop-color="#fff" stop-opacity="0.25"/></linearGradient><mask id="m5" maskUnits="userSpaceOnUse" x="0" y="0" width="1418" height="934"><rect x="0" y="0" width="1418" height="934" fill="url(#mg5)"/></mask></defs><path d="M335.35,552.20 C338.90,551.93 342.45,551.67 346.00,550.60 C350.47,549.26 354.93,542.50 359.40,540.70 C363.87,538.90 368.33,538.00 372.80,538.00 C377.27,538.00 381.73,538.50 386.20,539.40 C390.67,540.30 395.13,542.67 399.60,543.40 C404.93,544.27 410.27,544.70 415.60,544.70 C420.97,544.70 426.33,543.52 431.70,542.90 C436.13,542.38 440.57,541.73 445.00,541.30 C450.37,540.78 455.73,540.93 461.10,540.20 C466.47,539.47 471.83,535.47 477.20,534.00 C482.53,532.54 487.87,532.55 493.20,531.40 C496.77,530.63 500.33,530.50 503.90,528.70 C508.37,526.45 512.83,517.97 517.30,515.30 C521.77,512.63 526.23,511.43 530.70,511.30 C544.93,510.90 559.17,511.10 573.40,510.70 C576.07,510.63 578.73,509.17 581.40,506.10 C584.10,503.00 586.80,494.76 589.50,488.70 C592.17,482.72 594.83,474.04 597.50,470.00 C601.07,464.60 604.63,463.30 608.20,461.90 C611.77,460.50 615.33,461.20 618.90,459.80 C621.57,458.75 624.23,456.00 626.90,452.50 C630.50,447.78 634.10,436.47 637.70,432.50 C641.27,428.57 644.83,427.95 648.40,426.60 C651.97,425.25 655.53,425.87 659.10,424.40 C661.77,423.30 664.43,417.23 667.10,411.00 C669.77,404.77 672.43,392.58 675.10,387.00 C678.70,379.47 682.30,376.40 685.90,375.70 C690.33,374.83 694.77,375.27 699.20,374.40 C704.57,373.35 709.93,366.80 715.30,365.00 C720.67,363.20 726.03,362.30 731.40,362.30 C735.87,362.30 740.33,363.13 744.80,364.20 C749.23,365.27 753.67,368.17 758.10,368.70 C762.57,369.23 767.03,368.97 771.50,369.50 C774.20,369.82 776.90,371.30 779.60,374.90 C782.27,378.46 784.93,389.00 787.60,397.70 C790.27,406.40 792.93,420.42 795.60,427.10 C799.17,436.03 802.73,438.86 806.30,440.50 C806.77,440.72 807.23,440.86 807.70,441.00 L807.70,559.90 L335.35,559.90 Z" fill="url(#g5)" mask="url(#m5)"/><path d="M335.50,560.00 C477.00,560.00 618.50,560.00 760.00,560.00 C763.83,560.00 767.67,559.87 771.50,559.60 C773.67,559.45 775.83,558.68 778.00,557.50 C780.67,556.05 783.33,552.75 786.00,551.00 C788.67,549.25 791.33,547.53 794.00,547.00 C796.33,546.53 798.67,546.47 801.00,546.30 C803.17,546.14 805.33,546.07 807.50,546.00" fill="none" stroke="#3bb4ee" stroke-width="2.0" stroke-linecap="round" stroke-dasharray="0.01 4.38"/><path d="M335.35,552.20 C338.90,551.93 342.45,551.67 346.00,550.60 C350.47,549.26 354.93,542.50 359.40,540.70 C363.87,538.90 368.33,538.00 372.80,538.00 C377.27,538.00 381.73,538.50 386.20,539.40 C390.67,540.30 395.13,542.67 399.60,543.40 C404.93,544.27 410.27,544.70 415.60,544.70 C420.97,544.70 426.33,543.52 431.70,542.90 C436.13,542.38 440.57,541.73 445.00,541.30 C450.37,540.78 455.73,540.93 461.10,540.20 C466.47,539.47 471.83,535.47 477.20,534.00 C482.53,532.54 487.87,532.55 493.20,531.40 C496.77,530.63 500.33,530.50 503.90,528.70 C508.37,526.45 512.83,517.97 517.30,515.30 C521.77,512.63 526.23,511.43 530.70,511.30 C544.93,510.90 559.17,511.10 573.40,510.70 C576.07,510.63 578.73,509.17 581.40,506.10 C584.10,503.00 586.80,494.76 589.50,488.70 C592.17,482.72 594.83,474.04 597.50,470.00 C601.07,464.60 604.63,463.30 608.20,461.90 C611.77,460.50 615.33,461.20 618.90,459.80 C621.57,458.75 624.23,456.00 626.90,452.50 C630.50,447.78 634.10,436.47 637.70,432.50 C641.27,428.57 644.83,427.95 648.40,426.60 C651.97,425.25 655.53,425.87 659.10,424.40 C661.77,423.30 664.43,417.23 667.10,411.00 C669.77,404.77 672.43,392.58 675.10,387.00 C678.70,379.47 682.30,376.40 685.90,375.70 C690.33,374.83 694.77,375.27 699.20,374.40 C704.57,373.35 709.93,366.80 715.30,365.00 C720.67,363.20 726.03,362.30 731.40,362.30 C735.87,362.30 740.33,363.13 744.80,364.20 C749.23,365.27 753.67,368.17 758.10,368.70 C762.57,369.23 767.03,368.97 771.50,369.50 C774.20,369.82 776.90,371.30 779.60,374.90 C782.27,378.46 784.93,389.00 787.60,397.70 C790.27,406.40 792.93,420.42 795.60,427.10 C799.17,436.03 802.73,438.86 806.30,440.50 C806.77,440.72 807.23,440.86 807.70,441.00" fill="none" stroke="#13a8ec" stroke-width="2.2" stroke-linecap="round" stroke-linejoin="round"/></svg>
<div class="a" style="left:911.00px;top:559.40px;width:478.70px;height:1.00px;background:#eeeeee"></div>
<svg class="a" style="left:0;top:0" width="1418" height="934" viewBox="0 0 1418 934"><defs><linearGradient id="g6" x1="0" y1="389" x2="0" y2="559.9" gradientUnits="userSpaceOnUse"><stop offset="0" stop-color="#13a8ec" stop-opacity="0.085"/><stop offset="1" stop-color="#13a8ec" stop-opacity="0.0"/></linearGradient><linearGradient id="mg6" x1="910.7" y1="0" x2="1389" y2="0" gradientUnits="userSpaceOnUse"><stop offset="0" stop-color="#fff"/><stop offset="0.82" stop-color="#fff"/><stop offset="1" stop-color="#fff" stop-opacity="0.25"/></linearGradient><mask id="m6" maskUnits="userSpaceOnUse" x="0" y="0" width="1418" height="934"><rect x="0" y="0" width="1418" height="934" fill="url(#mg6)"/></mask></defs><path d="M910.70,532.30 C913.83,531.48 916.97,530.67 920.10,527.40 C922.33,525.07 924.57,520.30 926.80,515.40 C929.47,509.55 932.13,499.67 934.80,494.00 C937.47,488.33 940.13,482.48 942.80,481.40 C945.93,480.13 949.07,479.50 952.20,479.50 C955.77,479.50 959.33,480.77 962.90,483.30 C965.13,484.89 967.37,488.14 969.60,491.30 C972.27,495.07 974.93,502.31 977.60,504.70 C981.17,507.90 984.73,509.08 988.30,509.50 C994.57,510.23 1000.83,510.26 1007.10,510.60 C1012.43,510.89 1017.77,511.13 1023.10,511.40 C1028.47,511.67 1033.83,511.67 1039.20,512.20 C1042.77,512.55 1046.33,514.57 1049.90,515.90 C1053.47,517.23 1057.03,520.20 1060.60,520.20 C1065.03,520.20 1069.47,519.93 1073.90,519.40 C1077.50,518.97 1081.10,516.17 1084.70,510.00 C1087.37,505.43 1090.03,496.65 1092.70,491.30 C1095.37,485.95 1098.03,479.63 1100.70,477.90 C1104.30,475.57 1107.90,475.74 1111.50,474.40 C1115.07,473.07 1118.63,472.90 1122.20,469.90 C1125.77,466.90 1129.33,458.14 1132.90,453.80 C1135.57,450.56 1138.23,446.51 1140.90,445.80 C1144.17,444.93 1147.43,444.50 1150.70,444.50 C1154.27,444.50 1157.83,446.30 1161.40,449.90 C1164.10,452.63 1166.80,459.43 1169.50,464.60 C1172.17,469.70 1174.83,478.03 1177.50,480.70 C1181.97,485.17 1186.43,487.40 1190.90,487.40 C1194.47,487.40 1198.03,486.03 1201.60,483.30 C1205.17,480.57 1208.73,472.38 1212.30,468.60 C1215.87,464.82 1219.43,461.53 1223.00,460.60 C1226.57,459.67 1230.13,460.13 1233.70,459.20 C1236.40,458.49 1239.10,456.38 1241.80,451.20 C1243.57,447.81 1245.33,443.55 1247.10,437.80 C1249.77,429.12 1252.43,410.77 1255.10,403.00 C1257.73,395.33 1260.37,392.65 1263.00,391.20 C1265.67,389.73 1268.33,389.00 1271.00,389.00 C1273.67,389.00 1276.33,389.73 1279.00,390.60 C1281.30,391.35 1283.60,391.77 1285.90,393.60 C1289.03,396.09 1292.17,402.72 1295.30,405.70 C1298.87,409.09 1302.43,411.05 1306.00,411.80 C1310.47,412.73 1314.93,412.27 1319.40,413.20 C1323.87,414.13 1328.33,417.17 1332.80,418.50 C1337.27,419.83 1341.73,420.37 1346.20,421.20 C1348.87,421.69 1351.53,421.67 1354.20,422.60 C1356.87,423.53 1359.53,425.89 1362.20,429.80 C1365.80,435.08 1369.40,447.72 1373.00,453.90 C1375.67,458.48 1378.33,462.80 1381.00,464.60 C1383.67,466.40 1386.33,466.85 1389.00,467.30 L1389.00,559.90 L910.70,559.90 Z" fill="url(#g6)" mask="url(#m6)"/><path d="M911.00,560.00 C1055.67,560.00 1200.33,560.00 1345.00,560.00 C1348.07,560.00 1351.13,559.73 1354.20,559.20 C1356.80,558.75 1359.40,557.49 1362.00,554.30 C1365.67,549.80 1369.33,536.69 1373.00,531.50 C1375.67,527.73 1378.33,525.07 1381.00,524.00 C1384.00,522.80 1387.00,522.50 1390.00,522.20" fill="none" stroke="#3bb4ee" stroke-width="2.0" stroke-linecap="round" stroke-dasharray="0.01 4.38"/><path d="M910.70,532.30 C913.83,531.48 916.97,530.67 920.10,527.40 C922.33,525.07 924.57,520.30 926.80,515.40 C929.47,509.55 932.13,499.67 934.80,494.00 C937.47,488.33 940.13,482.48 942.80,481.40 C945.93,480.13 949.07,479.50 952.20,479.50 C955.77,479.50 959.33,480.77 962.90,483.30 C965.13,484.89 967.37,488.14 969.60,491.30 C972.27,495.07 974.93,502.31 977.60,504.70 C981.17,507.90 984.73,509.08 988.30,509.50 C994.57,510.23 1000.83,510.26 1007.10,510.60 C1012.43,510.89 1017.77,511.13 1023.10,511.40 C1028.47,511.67 1033.83,511.67 1039.20,512.20 C1042.77,512.55 1046.33,514.57 1049.90,515.90 C1053.47,517.23 1057.03,520.20 1060.60,520.20 C1065.03,520.20 1069.47,519.93 1073.90,519.40 C1077.50,518.97 1081.10,516.17 1084.70,510.00 C1087.37,505.43 1090.03,496.65 1092.70,491.30 C1095.37,485.95 1098.03,479.63 1100.70,477.90 C1104.30,475.57 1107.90,475.74 1111.50,474.40 C1115.07,473.07 1118.63,472.90 1122.20,469.90 C1125.77,466.90 1129.33,458.14 1132.90,453.80 C1135.57,450.56 1138.23,446.51 1140.90,445.80 C1144.17,444.93 1147.43,444.50 1150.70,444.50 C1154.27,444.50 1157.83,446.30 1161.40,449.90 C1164.10,452.63 1166.80,459.43 1169.50,464.60 C1172.17,469.70 1174.83,478.03 1177.50,480.70 C1181.97,485.17 1186.43,487.40 1190.90,487.40 C1194.47,487.40 1198.03,486.03 1201.60,483.30 C1205.17,480.57 1208.73,472.38 1212.30,468.60 C1215.87,464.82 1219.43,461.53 1223.00,460.60 C1226.57,459.67 1230.13,460.13 1233.70,459.20 C1236.40,458.49 1239.10,456.38 1241.80,451.20 C1243.57,447.81 1245.33,443.55 1247.10,437.80 C1249.77,429.12 1252.43,410.77 1255.10,403.00 C1257.73,395.33 1260.37,392.65 1263.00,391.20 C1265.67,389.73 1268.33,389.00 1271.00,389.00 C1273.67,389.00 1276.33,389.73 1279.00,390.60 C1281.30,391.35 1283.60,391.77 1285.90,393.60 C1289.03,396.09 1292.17,402.72 1295.30,405.70 C1298.87,409.09 1302.43,411.05 1306.00,411.80 C1310.47,412.73 1314.93,412.27 1319.40,413.20 C1323.87,414.13 1328.33,417.17 1332.80,418.50 C1337.27,419.83 1341.73,420.37 1346.20,421.20 C1348.87,421.69 1351.53,421.67 1354.20,422.60 C1356.87,423.53 1359.53,425.89 1362.20,429.80 C1365.80,435.08 1369.40,447.72 1373.00,453.90 C1375.67,458.48 1378.33,462.80 1381.00,464.60 C1383.67,466.40 1386.33,466.85 1389.00,467.30" fill="none" stroke="#13a8ec" stroke-width="2.2" stroke-linecap="round" stroke-linejoin="round"/></svg>
<div class="card" style="left:262.50px;top:666.60px;width:372.20px;height:270.40px;"></div>
<div class="card" style="left:650.20px;top:666.60px;width:372.10px;height:270.40px;"></div>
<div class="card" style="left:1037.80px;top:666.60px;width:372.20px;height:270.40px;"></div>
<div class="t" style="left:280.50px;top:688.09px;font-size:13.6px;color:#1c1c1c;font-weight:400;font-style:normal;letter-spacing:0.524px;-webkit-text-stroke:0.26px #1c1c1c;">Total sales by sales channel</div>
<div class="ul" style="left:280.50px;top:703.30px;width:183.50px"></div>
<div class="t" style="left:667.90px;top:688.09px;font-size:13.6px;color:#1c1c1c;font-weight:400;font-style:normal;letter-spacing:0.541px;-webkit-text-stroke:0.26px #1c1c1c;">Average order value over time</div>
<div class="ul" style="left:667.90px;top:703.30px;width:197.10px"></div>
<div class="t" style="left:1056.40px;top:688.09px;font-size:13.6px;color:#1c1c1c;font-weight:400;font-style:normal;letter-spacing:0.622px;-webkit-text-stroke:0.26px #1c1c1c;">Total sales by product</div>
<div class="ul" style="left:1056.40px;top:703.30px;width:144.60px"></div>
<svg class="a" style="left:0;top:0" width="1418" height="934" viewBox="0 0 1418 934"><path d="M352.58,759.71 A55.8,55.8 0 1 1 301.02,792.36" fill="none" stroke="#13aaee" stroke-width="15.2"/><path d="M301.86,790.60 A55.8,55.8 0 0 1 336.61,761.81" fill="none" stroke="#6c46e6" stroke-width="15.2"/><path d="M338.58,761.29 A55.8,55.8 0 0 1 346.16,759.99" fill="none" stroke="#5b80ea" stroke-width="15.2"/><path d="M348.49,759.80 A55.8,55.8 0 0 1 349.66,759.74" fill="none" stroke="#d23db0" stroke-width="15.2"/></svg>
<div class="t" style="left:313.70px;top:797.77px;font-size:20px;color:#1a1a1a;font-weight:400;font-style:normal;letter-spacing:0.298px;-webkit-text-stroke:0.3px #1a1a1a;">$197.6K</div>
<svg class="a" style="left:327.70px;top:826.30px;" width="6.50" height="6.50" viewBox="0 0 8 8"><path d="M1.5 6.5 L6.2 1.8 M2.6 1.5 L6.5 1.5 L6.5 5.4" fill="none" stroke="#0a7f39" stroke-width="1.55" stroke-linecap="butt" stroke-linejoin="miter"/></svg>
<div class="t" style="left:337.80px;top:823.37px;font-size:11.5px;color:#0a7f39;font-weight:400;font-style:normal;letter-spacing:0.279px;-webkit-text-stroke:0.3px #0a7f39;">7.8K%</div>
<div class="a" style="left:445.70px;top:765.70px;width:12.10px;height:12.00px;background:#13aaee;border-radius:2px"></div>
<div class="t" style="left:461.80px;top:765.84px;font-size:12px;color:#616161;font-weight:400;font-style:normal;letter-spacing:0.022px;-webkit-text-stroke:0.05px #616161;">O...</div>
<div class="t" style="left:502.70px;top:765.59px;font-size:12.3px;color:#616161;font-weight:400;font-style:normal;letter-spacing:0.179px;-webkit-text-stroke:0.05px #616161;">$165.6K</div>
<svg class="a" style="left:555.20px;top:768.60px;" width="6.50" height="6.50" viewBox="0 0 8 8"><path d="M1.5 6.5 L6.2 1.8 M2.6 1.5 L6.5 1.5 L6.5 5.4" fill="none" stroke="#0a7f39" stroke-width="1.55" stroke-linecap="butt" stroke-linejoin="miter"/></svg>
<div class="t" style="left:563.60px;top:766.07px;font-size:11.5px;color:#0a7f39;font-weight:400;font-style:normal;letter-spacing:-0.179px;-webkit-text-stroke:0.3px #0a7f39;">239.9K%</div>
<div class="a" style="left:445.70px;top:795.20px;width:12.10px;height:12.00px;background:#6c46e6;border-radius:2px"></div>
<div class="t" style="left:461.80px;top:795.34px;font-size:12px;color:#616161;font-weight:400;font-style:normal;letter-spacing:0.465px;-webkit-text-stroke:0.05px #616161;">B...</div>
<div class="t" style="left:512.00px;top:795.09px;font-size:12.3px;color:#616161;font-weight:400;font-style:normal;letter-spacing:-0.277px;-webkit-text-stroke:0.05px #616161;">$27.1K</div>
<svg class="a" style="left:555.20px;top:798.10px;" width="6.50" height="6.50" viewBox="0 0 8 8"><path d="M1.5 6.5 L6.2 1.8 M2.6 1.5 L6.5 1.5 L6.5 5.4" fill="none" stroke="#0a7f39" stroke-width="1.55" stroke-linecap="butt" stroke-linejoin="miter"/></svg>
<div class="t" style="left:563.60px;top:795.57px;font-size:11.5px;color:#0a7f39;font-weight:400;font-style:normal;letter-spacing:0.554px;-webkit-text-stroke:0.3px #0a7f39;">1K%</div>
<div class="a" style="left:445.70px;top:824.70px;width:12.10px;height:12.00px;background:#5b80ea;border-radius:2px"></div>
<div class="t" style="left:461.80px;top:824.84px;font-size:12px;color:#616161;font-weight:400;font-style:normal;letter-spacing:0.465px;-webkit-text-stroke:0.05px #616161;">S...</div>
<div class="t" style="left:513.50px;top:824.59px;font-size:12.3px;color:#616161;font-weight:400;font-style:normal;letter-spacing:0.989px;-webkit-text-stroke:0.05px #616161;">$4.4K</div>
<div class="a" style="left:555.60px;top:830.50px;width:11.80px;height:1.40px;background:#8a8a8a"></div>
<div class="a" style="left:445.70px;top:854.20px;width:12.10px;height:12.00px;background:#d23db0;border-radius:2px"></div>
<div class="t" style="left:461.80px;top:854.34px;font-size:12px;color:#616161;font-weight:400;font-style:normal;letter-spacing:1.133px;-webkit-text-stroke:0.05px #616161;">F...</div>
<div class="t" style="left:502.70px;top:854.09px;font-size:12.3px;color:#616161;font-weight:400;font-style:normal;letter-spacing:0.406px;-webkit-text-stroke:0.05px #616161;">$516.32</div>
<div class="a" style="left:555.60px;top:860.00px;width:11.80px;height:1.40px;background:#8a8a8a"></div>
<div class="t" style="left:667.90px;top:716.05px;font-size:20.5px;color:#1a1a1a;font-weight:400;font-style:normal;letter-spacing:1.839px;-webkit-text-stroke:0.35px #1a1a1a;">$43.23</div>
<svg class="a" style="left:748.40px;top:724.50px;" width="6.50" height="6.50" viewBox="0 0 8 8"><path d="M1.5 6.5 L6.2 1.8 M2.6 1.5 L6.5 1.5 L6.5 5.4" fill="none" stroke="#0a7f39" stroke-width="1.55" stroke-linecap="butt" stroke-linejoin="miter"/></svg>
<div class="t" style="left:758.80px;top:720.94px;font-size:12px;color:#0a7f39;font-weight:400;font-style:normal;letter-spacing:0.536px;-webkit-text-stroke:0.3px #0a7f39;">235%</div>
<div class="a" style="left:722.20px;top:761.00px;width:277.90px;height:1.00px;background:#eeeeee"></div>
<div class="t" style="left:669.90px;top:754.57px;font-size:11.5px;color:#616161;font-weight:400;font-style:normal;letter-spacing:0.105px;-webkit-text-stroke:0.05px #616161;">$100</div>
<div class="t" style="left:669.90px;top:837.97px;font-size:11.5px;color:#616161;font-weight:400;font-style:normal;letter-spacing:1.308px;-webkit-text-stroke:0.05px #616161;">$0</div>
<div class="t" style="left:698.80px;top:860.47px;font-size:11.5px;color:#616161;font-weight:400;font-style:normal;letter-spacing:0.517px;-webkit-text-stroke:0.05px #616161;">Jul 2024</div>
<div class="t" style="left:788.30px;top:860.47px;font-size:11.5px;color:#616161;font-weight:400;font-style:normal;letter-spacing:0.553px;-webkit-text-stroke:0.05px #616161;">Nov 2024</div>
<div class="t" style="left:881.40px;top:860.47px;font-size:11.5px;color:#616161;font-weight:400;font-style:normal;letter-spacing:0.502px;-webkit-text-stroke:0.05px #616161;">Mar 2025</div>
<div class="a" style="left:722.20px;top:843.90px;width:277.90px;height:1.00px;background:#eeeeee"></div>
<svg class="a" style="left:0;top:0" width="1418" height="934" viewBox="0 0 1418 934"><defs><linearGradient id="g7" x1="0" y1="788.9" x2="0" y2="844.4" gradientUnits="userSpaceOnUse"><stop offset="0" stop-color="#13a8ec" stop-opacity="0.09"/><stop offset="1" stop-color="#13a8ec" stop-opacity="0.0"/></linearGradient><linearGradient id="mg7" x1="722.2" y1="0" x2="1000.1" y2="0" gradientUnits="userSpaceOnUse"><stop offset="0" stop-color="#fff"/><stop offset="0.82" stop-color="#fff"/><stop offset="1" stop-color="#fff" stop-opacity="0.25"/></linearGradient><mask id="m7" maskUnits="userSpaceOnUse" x="0" y="0" width="1418" height="934"><rect x="0" y="0" width="1418" height="934" fill="url(#mg7)"/></mask></defs><path d="M722.20,836.80 C726.13,836.94 730.07,837.09 734.00,837.20 C738.13,837.32 742.27,837.50 746.40,837.50 C750.50,837.50 754.60,837.22 758.70,837.00 C763.63,836.74 768.57,836.67 773.50,836.00 C777.63,835.44 781.77,834.03 785.90,833.50 C789.20,833.07 792.50,833.27 795.80,832.80 C799.07,832.34 802.33,825.35 805.60,823.40 C808.07,821.93 810.53,821.00 813.00,821.00 C815.47,821.00 817.93,821.30 820.40,821.90 C823.70,822.70 827.00,826.10 830.30,826.90 C834.43,827.90 838.57,827.40 842.70,828.40 C845.97,829.19 849.23,832.97 852.50,833.30 C855.80,833.63 859.10,833.80 862.40,833.80 C864.87,833.80 867.33,827.67 869.80,821.50 C872.27,815.33 874.73,801.73 877.20,796.80 C879.27,792.67 881.33,790.60 883.40,790.60 C887.93,790.60 892.47,790.60 897.00,790.60 C901.93,790.60 906.87,791.00 911.80,791.80 C915.07,792.33 918.33,797.88 921.60,799.20 C924.90,800.53 928.20,801.20 931.50,801.20 C933.97,801.20 936.43,799.32 938.90,798.00 C942.20,796.23 945.50,791.94 948.80,791.30 C952.90,790.50 957.00,790.47 961.10,790.10 C966.07,789.65 971.03,788.90 976.00,788.90 C979.27,788.90 982.53,789.28 985.80,789.90 C988.27,790.37 990.73,791.35 993.20,791.80 C995.50,792.22 997.80,792.41 1000.10,792.60 L1000.10,844.40 L722.20,844.40 Z" fill="url(#g7)" mask="url(#m7)"/><path d="M722.20,844.20 C800.60,844.20 879.00,844.20 957.40,844.20 C960.27,844.20 963.13,829.93 966.00,826.40 C969.73,821.80 973.47,819.50 977.20,819.50 C980.07,819.50 982.93,822.10 985.80,823.90 C989.93,826.50 994.07,830.15 998.20,833.80" fill="none" stroke="#3bb4ee" stroke-width="1.9" stroke-linecap="round" stroke-dasharray="0.01 4.1"/><path d="M722.20,836.80 C726.13,836.94 730.07,837.09 734.00,837.20 C738.13,837.32 742.27,837.50 746.40,837.50 C750.50,837.50 754.60,837.22 758.70,837.00 C763.63,836.74 768.57,836.67 773.50,836.00 C777.63,835.44 781.77,834.03 785.90,833.50 C789.20,833.07 792.50,833.27 795.80,832.80 C799.07,832.34 802.33,825.35 805.60,823.40 C808.07,821.93 810.53,821.00 813.00,821.00 C815.47,821.00 817.93,821.30 820.40,821.90 C823.70,822.70 827.00,826.10 830.30,826.90 C834.43,827.90 838.57,827.40 842.70,828.40 C845.97,829.19 849.23,832.97 852.50,833.30 C855.80,833.63 859.10,833.80 862.40,833.80 C864.87,833.80 867.33,827.67 869.80,821.50 C872.27,815.33 874.73,801.73 877.20,796.80 C879.27,792.67 881.33,790.60 883.40,790.60 C887.93,790.60 892.47,790.60 897.00,790.60 C901.93,790.60 906.87,791.00 911.80,791.80 C915.07,792.33 918.33,797.88 921.60,799.20 C924.90,800.53 928.20,801.20 931.50,801.20 C933.97,801.20 936.43,799.32 938.90,798.00 C942.20,796.23 945.50,791.94 948.80,791.30 C952.90,790.50 957.00,790.47 961.10,790.10 C966.07,789.65 971.03,788.90 976.00,788.90 C979.27,788.90 982.53,789.28 985.80,789.90 C988.27,790.37 990.73,791.35 993.20,791.80 C995.50,792.22 997.80,792.41 1000.10,792.60" fill="none" stroke="#13a8ec" stroke-width="2.2" stroke-linecap="round" stroke-linejoin="round"/></svg>
<div class="a" style="left:672.30px;top:905.00px;width:13.20px;height:2.00px;background:#13a8ec;border-radius:1px"></div>
<div class="t" style="left:690.80px;top:900.37px;font-size:11.5px;color:#616161;font-weight:400;font-style:normal;letter-spacing:0.108px;-webkit-text-stroke:0.05px #616161;">Jul 17, 2024–Jul 16, 2...</div>
<svg class="a" style="left:839.60px;top:904.00px;" width="16.00" height="4.00" viewBox="839.6 904 16 4"><circle cx="841.60" cy="906" r="1.05" fill="#3bb4ee"/><circle cx="846.90" cy="906" r="1.05" fill="#3bb4ee"/><circle cx="852.20" cy="906" r="1.05" fill="#3bb4ee"/></svg>
<div class="t" style="left:859.50px;top:900.37px;font-size:11.5px;color:#616161;font-weight:400;font-style:normal;letter-spacing:0.170px;-webkit-text-stroke:0.05px #616161;">Jul 18, 2023–Jul 16, 2...</div>
<div class="t" style="left:1056.30px;top:718.51px;font-size:11.8px;color:#616161;font-weight:400;font-style:normal;letter-spacing:0.202px;-webkit-text-stroke:0.05px #616161;">Horseshoe Necklace · Casey Kearney Jewelry · None</div>
<div class="a" style="left:1056.30px;top:735.00px;width:215.70px;height:34.60px;background:#0fadee;border-radius:0 3px 3px 0"></div>
<div class="t" style="left:1282.80px;top:746.64px;font-size:12px;color:#616161;font-weight:400;font-style:normal;letter-spacing:0.016px;-webkit-text-stroke:0.05px #616161;">$18,363.87</div>
<div class="a" style="left:1356.70px;top:751.90px;width:12.00px;height:1.40px;background:#8a8a8a"></div>
<div class="a" style="left:1056.00px;top:772.60px;width:1.00px;height:34.30px;background:#9fd9f6"></div>
<div class="t" style="left:1067.50px;top:784.14px;font-size:12px;color:#616161;font-weight:400;font-style:normal;letter-spacing:0.492px;-webkit-text-stroke:0.05px #616161;">$0.00</div>
<div class="t" style="left:1056.30px;top:828.91px;font-size:11.8px;color:#616161;font-weight:400;font-style:normal;letter-spacing:0.178px;-webkit-text-stroke:0.05px #616161;">Triple Beaded Bracelet Set · Casey Kearney Jewelry · None</div>
<div class="a" style="left:1056.30px;top:846.00px;width:198.20px;height:34.20px;background:#0fadee;border-radius:0 3px 3px 0"></div>
<div class="t" style="left:1265.30px;top:856.74px;font-size:12px;color:#616161;font-weight:400;font-style:normal;letter-spacing:0.071px;-webkit-text-stroke:0.05px #616161;">$16,884.97</div>
<div class="a" style="left:1340.00px;top:862.00px;width:12.00px;height:1.40px;background:#8a8a8a"></div>
<div class="a" style="left:1056.00px;top:882.70px;width:1.00px;height:34.30px;background:#9fd9f6"></div>
<div class="t" style="left:1067.50px;top:894.84px;font-size:12px;color:#616161;font-weight:400;font-style:normal;letter-spacing:0.492px;-webkit-text-stroke:0.05px #616161;">$0.00</div>
<div class="a" style="left:0.00px;top:880.00px;width:1418.00px;height:54.00px;background:linear-gradient(180deg,rgba(0,0,0,0) 0%,rgba(0,0,0,.015) 50%,rgba(0,0,0,.065) 100%)"></div></body></html>
